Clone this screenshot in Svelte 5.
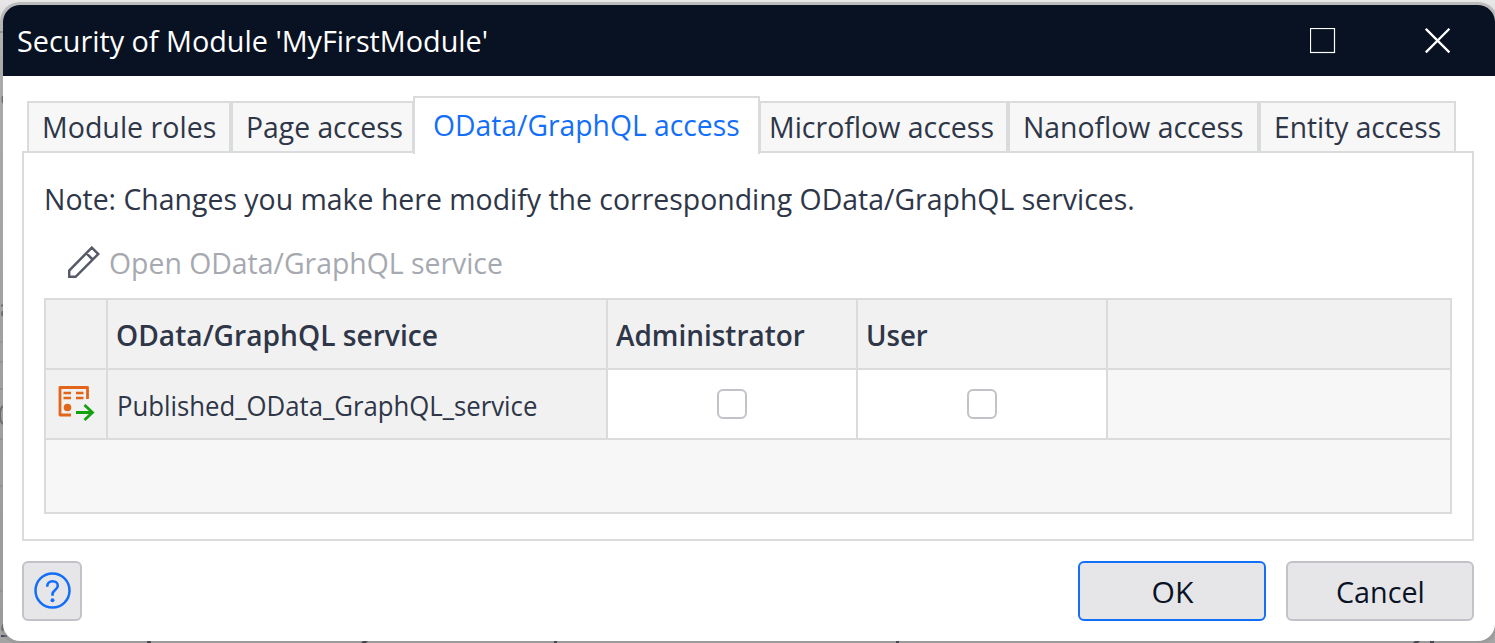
<script>
  const tabs = [
    { label: 'Module roles', size: 204, ink: 174, pad: 13 },
    { label: 'Page access', size: 183, ink: 157, pad: 13 },
    { label: 'OData/GraphQL access', size: 345, ink: 307, pad: 18, active: true },
    { label: 'Microflow access', size: 249, ink: 225, pad: 8 },
    { label: 'Nanoflow access', size: 251, ink: 221, pad: 13 },
    { label: 'Entity access', size: 197, ink: 167, pad: 13 }
  ];
  const roles = [
    { name: 'Administrator', ink: 189 },
    { name: 'User', ink: 62 }
  ];

  // Scales a label horizontally to the given width.
  function fit(node, width) {
    const apply = () => {
      node.style.transform = 'none';
      node.style.transform = `scaleX(${width / node.offsetWidth})`;
    };
    apply();
    document.fonts?.ready.then(apply);
  }
</script>

<div class="desktop">
  <svg class="behind" width="1495" height="643" viewBox="0 0 1495 643">
    <g fill="#949498">
      <rect y="31" width="3" height="2" /><rect y="341" width="3" height="1.5" /><rect y="361" width="3" height="2" />
      <rect y="388" width="3" height="2" /><rect y="438" width="3" height="2" /><rect y="485" width="3" height="2" />
      <rect y="590" width="3" height="2" />
    </g>
    <g fill="none" stroke="#454955" stroke-width="2">
      <path d="M3 96q-1 3 0 7M1 305.500h2M3 311q-2 3 0 5M3 406q-3 2-3 9t3 9M4 624q-3 3-1 7M1 636h6" />
    </g>
  </svg>

  <section class="dialog">
    <header>
      <h1><span use:fit={471}>Security of Module 'MyFirstModule'</span></h1>
      <svg class="max" width="26" height="26" viewBox="0 0 26 26"><rect x=".5" y=".5" width="24" height="24" fill="none" stroke="#fff" stroke-width="1.2" /></svg>
      <svg class="close" width="26" height="26" viewBox="0 0 26 26"><path d="M.8.8l23.600 23.600M24.400.8l-23.600 23.600" stroke="#fff" stroke-width="2.300" /></svg>
    </header>

    <main>
      <nav>
        {#each tabs as tab}
          <div class="tab" class:active={tab.active} style:width="{tab.size}px" style:padding-left="{tab.pad}px">
            <span use:fit={tab.ink}>{tab.label}</span>
          </div>
        {/each}
      </nav>

      <div class="panel">
        <p><span use:fit={1091}>Note: Changes you make here modify the corresponding OData/GraphQL services.</span></p>
        <div class="tool">
          <svg width="32" height="32" viewBox="0 0 32 32" fill="none" stroke="#575b67" stroke-width="2.5">
            <path d="M1.2 30.8v-6.3L23.8 1.6l6.500 6.400L7.600 30.800zM18.300 7.200l6.300 6.300" />
          </svg>
          <span use:fit={394}>Open OData/GraphQL service</span>
        </div>

        <div class="table">
          <div class="cell"></div>
          <div class="cell head"><span use:fit={322}>OData/GraphQL service</span></div>
          {#each roles as role}
            <div class="cell head"><span use:fit={role.ink}>{role.name}</span></div>
          {/each}
          <div class="cell last"></div>

          <div class="cell icon">
            <svg width="37" height="36" viewBox="0 0 37 36" fill="none">
              <path d="M13 29H2V1.500h27.500V13" stroke="#e2651a" stroke-width="2.800" stroke-linejoin="round" />
              <path d="M5.500 7h7.500M5.500 12h7.500M18 7h7.500M18 12h7.500" stroke="#e2651a" stroke-width="2.500" />
              <circle cx="9.500" cy="21.500" r="3.800" fill="#e2651a" />
              <path d="M18 26.500h16.500M26.500 19l8 7.500-8 7.500" stroke="#13a10e" stroke-width="2.800" />
            </svg>
          </div>
          <div class="cell name"><span use:fit={420}>Published_OData_GraphQL_service</span></div>
          {#each roles as role}
            <div class="cell check"><i></i></div>
          {/each}
          <div class="cell last blank"></div>
        </div>
      </div>

      <footer>
        <button class="help" aria-label="Help">
          <svg width="38" height="38" viewBox="0 0 38 38" fill="none" stroke="#146ff8">
            <circle cx="19.500" cy="18.500" r="17" stroke-width="2.500" />
            <path d="M14.200 14.700c0-3.500 2.200-5.500 5.400-5.500 3.100 0 5.200 1.900 5.200 4.600 0 4.200-5.300 4.300-5.300 8.400v1.600" stroke-width="2.600" />
            <circle cx="19.500" cy="28.300" r="2" fill="#146ff8" stroke="none" />
          </svg>
        </button>
        <button class="ok"><span use:fit={42}>OK</span></button>
        <button><span use:fit={89}>Cancel</span></button>
      </footer>
    </main>
  </section>

  <svg class="behind" width="1495" height="643" viewBox="0 0 1495 643" fill="#4b4852">
    <path d="M147 641h4v2h-4zM363 641h5l-2 2h-5zM554 641h3v2h-3zM896 641h3v2h-3zM1415 641h5l-2 2h-5zM1430 641h4v2h-4z" />
  </svg>
</div>

<style>
  :global(body) { margin: 0; overflow: hidden; }
  * { box-sizing: border-box; }
  .desktop {
    position: relative;
    width: 1495px;
    height: 643px;
    padding: 5px 0 0 3px;
    overflow: hidden;
    background: linear-gradient(#e8e8e8, #c4c4c4 60px, #b2b2b2 300px, #a4a4a4);
    font: 29.4px/40px "Open Sans", "Noto Sans", sans-serif;
    color: #2e3648;
  }
  .behind { position: absolute; left: 0; top: 0; }
  .dialog {
    position: relative;
    width: 1491.500px;
    height: 636px;
    border-radius: 17px;
    overflow: hidden;
    background: #fff;
    box-shadow: 0 0 0 3px rgba(145, 145, 145, .5);
  }
  span { display: inline-block; white-space: nowrap; transform-origin: 0 50%; flex: none; }
  header { display: flex; align-items: center; height: 71px; padding-left: 14px; background: #081222; color: #fff; }
  h1 { width: 1293px; margin: 0; font: inherit; }
  .max { margin-right: 89px; }
  main { padding: 20px 0 0 19px; }
  nav { position: relative; z-index: 1; display: flex; align-items: flex-end; height: 57px; padding-left: 5px; }
  .tab { height: 52px; padding-top: 4px; border: 2px solid #dadbdc; background: #f7f7f7; overflow: hidden; }
  .tab.active {
    height: 58px;
    width: 347px !important;
    margin: 0 -1px -1px;
    padding-top: 7px;
    border-bottom: 0;
    background: #fff;
    color: #146ff8;
    z-index: 1;
  }
  .panel { width: 1452px; height: 390px; margin-top: -2px; padding: 26px 20px 0; border: 2px solid #dadbdc; }
  p { height: 64px; margin: 0; }
  .tool { display: flex; gap: 9px; height: 55px; padding-left: 24px; color: #a6a9b0; }
  .tool svg { margin-top: 3px; }
  .table {
    display: grid;
    grid-template-columns: 62px 500px 250px 250px 342px;
    grid-template-rows: 70px 70px;
    width: 1408px;
    height: 216px;
    border: 2px solid #dadbdc;
    background: #f7f7f7;
  }
  .cell { display: flex; align-items: center; border: solid #dadbdc; border-width: 0 2px 2px 0; background: #f1f1f1; }
  .last { border-right: 0; }
  .blank { background: #f7f7f7; }
  .head { padding-left: 8px; padding-top: 2px; font-weight: 600; }
  .name { padding-left: 9px; padding-top: 1px; font-size: 28px; }
  .icon { padding: 0 0 0 12px; }
  .check { justify-content: center; background: #fff; }
  .check i { width: 30px; height: 30px; border: 2px solid #c2c2c9; border-radius: 6px; background: #fff; }
  footer { display: flex; gap: 20px; padding: 20px 0 0; }
  button {
    display: flex;
    align-items: center;
    justify-content: center;
    width: 188px;
    height: 60px;
    padding: 1px 0 0;
    border: 2px solid #c2c2c9;
    border-radius: 6px;
    background: #e6e6e9;
    color: #0a1325;
    font: inherit;
  }
  button span { transform-origin: 50% 50%; }
  .help { width: 60px; margin-right: 976px; padding: 0; }
  .ok { border-color: #146ff8; }
</style>
